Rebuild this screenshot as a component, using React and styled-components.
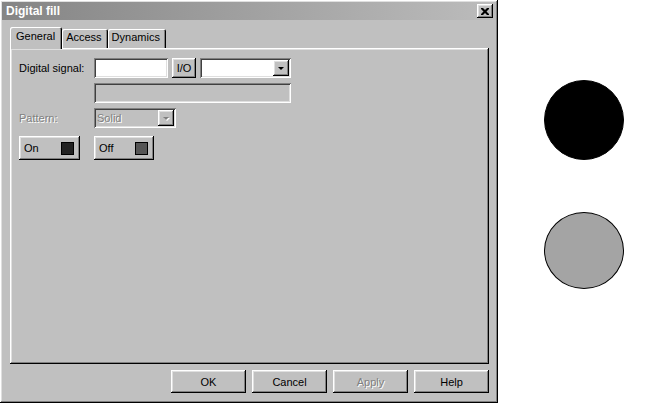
import React from 'react'
import styled, { createGlobalStyle } from 'styled-components'

const GlobalStyle = createGlobalStyle`
  html, body {
    margin: 0;
    padding: 0;
    background: #fff;
    font-family: "Liberation Sans", Arial, sans-serif;
    font-size: 11px;
  }
`

const raised = `
  box-shadow: inset -1px -1px #000, inset 1px 1px #fff, inset -2px -2px #808080, inset 2px 2px #dfdfdf;
`

const sunken = `
  box-shadow: inset 1px 1px #808080, inset -1px -1px #fff, inset 2px 2px #404040, inset -2px -2px #dfdfdf;
`

const Screen = styled.div`
  display: flex;
  width: 646px;
  height: 403px;
  overflow: hidden;
`

const Dialog = styled.div`
  box-sizing: border-box;
  width: 498px;
  height: 403px;
  background: #c0c0c0;
  padding: 2px;
  ${raised}
  display: flex;
  flex-direction: column;
`

const TitleBar = styled.div`
  height: 18px;
  display: flex;
  align-items: center;
  justify-content: space-between;
  padding: 0 3px 0 4px;
  background: linear-gradient(to right, #858585, #bcbcbc);
`

const TitleText = styled.span`
  color: #fff;
  font-weight: bold;
  font-size: 12px;
`

const CloseButton = styled.div`
  box-sizing: border-box;
  width: 16px;
  height: 14px;
  background: #c0c0c0;
  ${raised}
  display: flex;
  align-items: center;
  justify-content: center;
`

const Body = styled.div`
  flex: 1;
  display: flex;
  flex-direction: column;
  padding: 7px 7px 0 8px;
`

const TabRow = styled.div`
  display: flex;
  align-items: flex-end;
  height: 21px;
  padding-left: 1px;
  position: relative;
  z-index: 1;
`

const Tab = styled.div`
  box-sizing: border-box;
  height: ${p => (p.$active ? '22px' : '19px')};
  margin-bottom: ${p => (p.$active ? '-1px' : '0')};
  padding: ${p => (p.$active ? '3px 7px 0 6px' : '2px 6px 0 4px')};
  background: #c0c0c0;
  border-radius: 2px 2px 0 0;
  box-shadow: inset 1px 1px #fff, inset -1px 0 #000, inset -2px 0 #808080;
  color: #000;
  margin-left: ${p => (p.$active ? '-1px' : '0')};
`

const Panel = styled.div`
  box-sizing: border-box;
  height: 316px;
  width: 479px;
  ${raised}
  padding: 10px 9px;
  display: grid;
  grid-template-columns: 75px auto;
  grid-auto-rows: min-content;
  row-gap: 5px;
  align-items: center;
`

const Label = styled.span`
  color: ${p => (p.$disabled ? '#808080' : '#000')};
  text-shadow: ${p => (p.$disabled ? '1px 1px #fff' : 'none')};
`

const Line = styled.div`
  display: flex;
  align-items: center;
  gap: 4px;
  grid-column: ${p => (p.$wide ? '1 / span 2' : 'auto')};
  margin-top: ${p => p.$top || 0}px;
`

const Field = styled.div`
  box-sizing: border-box;
  width: ${p => p.$w}px;
  height: ${p => p.$h || 20}px;
  background: ${p => (p.$disabled ? '#c0c0c0' : '#fff')};
  ${sunken}
  display: flex;
  align-items: center;
  justify-content: space-between;
  padding: 2px 2px 2px 3px;
  color: #808080;
  text-shadow: 1px 1px #fff;
`

const DropButton = styled.div`
  box-sizing: border-box;
  width: 16px;
  height: 16px;
  background: #c0c0c0;
  ${raised}
  display: flex;
  align-items: center;
  justify-content: center;
`

const Arrow = styled.div`
  width: 0;
  height: 0;
  border-left: 3px solid transparent;
  border-right: 3px solid transparent;
  border-top: 3px solid ${p => (p.$disabled ? '#808080' : '#000')};
  filter: ${p => (p.$disabled ? 'drop-shadow(1px 1px 0 #fff)' : 'none')};
`

const Button = styled.div`
  box-sizing: border-box;
  width: ${p => p.$w}px;
  height: ${p => p.$h || 23}px;
  background: #c0c0c0;
  ${raised}
  display: flex;
  align-items: center;
  justify-content: ${p => (p.$split ? 'space-between' : 'center')};
  padding: ${p => (p.$split ? '0 6px 0 5px' : '0')};
  color: ${p => (p.$disabled ? '#808080' : '#000')};
  text-shadow: ${p => (p.$disabled ? '1px 1px #fff' : 'none')};
`

const Swatch = styled.div`
  width: 11px;
  height: 11px;
  background: ${p => p.$color};
  border: 1px solid #000;
`

const ButtonBar = styled.div`
  display: flex;
  justify-content: flex-end;
  gap: 6px;
  padding: 6px 0 0;
`

const Canvas = styled.div`
  flex: 1;
  display: flex;
  flex-direction: column;
  padding: 80px 0 0 46px;
  gap: 52px;
`

const Circle = styled.div`
  box-sizing: border-box;
  width: 80px;
  height: ${p => p.$h}px;
  border-radius: 50%;
  background: ${p => p.$fill};
  border: 1px solid #000;
`

function Combo({ width, disabled, value }) {
  return (
    <Field $w={width} $disabled={disabled}>
      <span>{value}</span>
      <DropButton>
        <Arrow $disabled={disabled} />
      </DropButton>
    </Field>
  )
}

export default function App() {
  return (
    <Screen>
      <GlobalStyle />
      <Dialog>
        <TitleBar>
          <TitleText>Digital fill</TitleText>
          <CloseButton>
            <svg width="8" height="7" viewBox="0 0 8 7">
              <path d="M0 0h2l2 2 2-2h2v1L5.5 3.5 8 6v1H6L4 5 2 7H0V6l2.5-2.5L0 1z" fill="#000" />
            </svg>
          </CloseButton>
        </TitleBar>
        <Body>
          <TabRow>
            <Tab $active>General</Tab>
            <Tab>Access</Tab>
            <Tab>Dynamics</Tab>
          </TabRow>
          <Panel>
            <Label>Digital signal:</Label>
            <Line>
              <Field $w={74} />
              <Button $w={24} $h={20}>I/O</Button>
              <Combo width={91} />
            </Line>
            <span />
            <Line>
              <Field $w={197} $disabled />
            </Line>
            <Label $disabled>Pattern:</Label>
            <Line>
              <Combo width={82} disabled value="Solid" />
            </Line>
            <Line $wide $top={3} style={{ gap: '14px' }}>
              <Button $w={61} $h={24} $split>
                <span>On</span>
                <Swatch $color="#222" />
              </Button>
              <Button $w={60} $h={24} $split>
                <span>Off</span>
                <Swatch $color="#555" />
              </Button>
            </Line>
          </Panel>
          <ButtonBar>
            <Button $w={75}>OK</Button>
            <Button $w={75}>Cancel</Button>
            <Button $w={75} $disabled>Apply</Button>
            <Button $w={75}>Help</Button>
          </ButtonBar>
        </Body>
      </Dialog>
      <Canvas>
        <Circle $h={80} $fill="#000" />
        <Circle $h={77} $fill="#a4a4a4" />
      </Canvas>
    </Screen>
  )
}
